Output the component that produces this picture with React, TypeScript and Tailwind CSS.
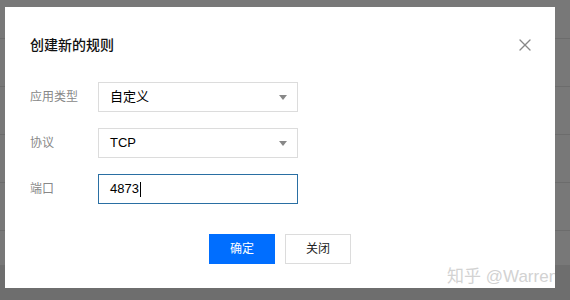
import { X } from 'lucide-react'

const font = { fontFamily: '"Liberation Sans", "Noto Sans CJK SC", sans-serif' }

const Field = ({ label, children }: { label: string; children: React.ReactNode }) => (
  <div className="flex items-center">
    <div className="w-[68px] text-[12px] text-[#888]">{label}</div>
    {children}
  </div>
)

const Select = ({ value }: { value: string }) => (
  <div className="w-[200px] h-[30px] border border-[#dcdcdc] flex items-center justify-between pl-[11px] pr-[10px] text-[13px] text-black">
    <span>{value}</span>
    <span className="w-0 h-0 border-l-[4px] border-r-[4px] border-t-[5px] border-l-transparent border-r-transparent border-t-[#888]"></span>
  </div>
)

export default function App() {
  return (
    <div className="relative w-[570px] h-[300px] overflow-hidden bg-[#787878]" style={font}>
      {/* page behind the overlay */}
      <div className="flex flex-col">
        <div className="h-[39px] border-b border-[#6c6c6c]"></div>
        <div className="h-[48px] border-b border-[#6c6c6c]"></div>
        <div className="h-[48px] border-b border-[#6c6c6c]"></div>
        <div className="h-[48px] border-b border-[#6c6c6c]"></div>
        <div className="h-[48px] border-b border-[#6c6c6c]"></div>
        <div className="h-[34px]"></div>
        <div className="h-[40px] bg-[#6e6e6e]"></div>
      </div>

      {/* dialog */}
      <div className="absolute left-[5px] top-[7px] w-[550px] h-[281px] bg-white overflow-hidden">
        <div className="flex items-center justify-between pl-[25px] pr-[20px] pt-[28px]">
          <h2 className="text-[14px] font-medium text-[#111] leading-5">创建新的规则</h2>
          <X className="w-[20px] h-[20px] text-[#888]" strokeWidth={1.6} />
        </div>

        <div className="flex flex-col gap-[16px] pl-[25px] mt-[27px]">
          <Field label="应用类型">
            <Select value="自定义" />
          </Field>
          <Field label="协议">
            <Select value="TCP" />
          </Field>
          <Field label="端口">
            <div className="w-[200px] h-[30px] border border-[#2a6fa3] flex items-center pl-[11px] text-[13px] text-black">
              <span>4873</span>
              <span className="w-px h-[15px] bg-black ml-px"></span>
            </div>
          </Field>
        </div>

        <div className="flex justify-center gap-[10px] mt-[30px]">
          <button className="w-[66px] h-[30px] bg-[#006eff] text-white text-[12px]">确定</button>
          <button className="w-[66px] h-[30px] border border-[#dcdcdc] bg-white text-[#222] text-[12px]">关闭</button>
        </div>

        <div className="absolute left-[442px] top-[260px] text-[17px] text-[#d2d2d2] whitespace-nowrap leading-5">
          知乎 @Warren
        </div>
      </div>
    </div>
  )
}
